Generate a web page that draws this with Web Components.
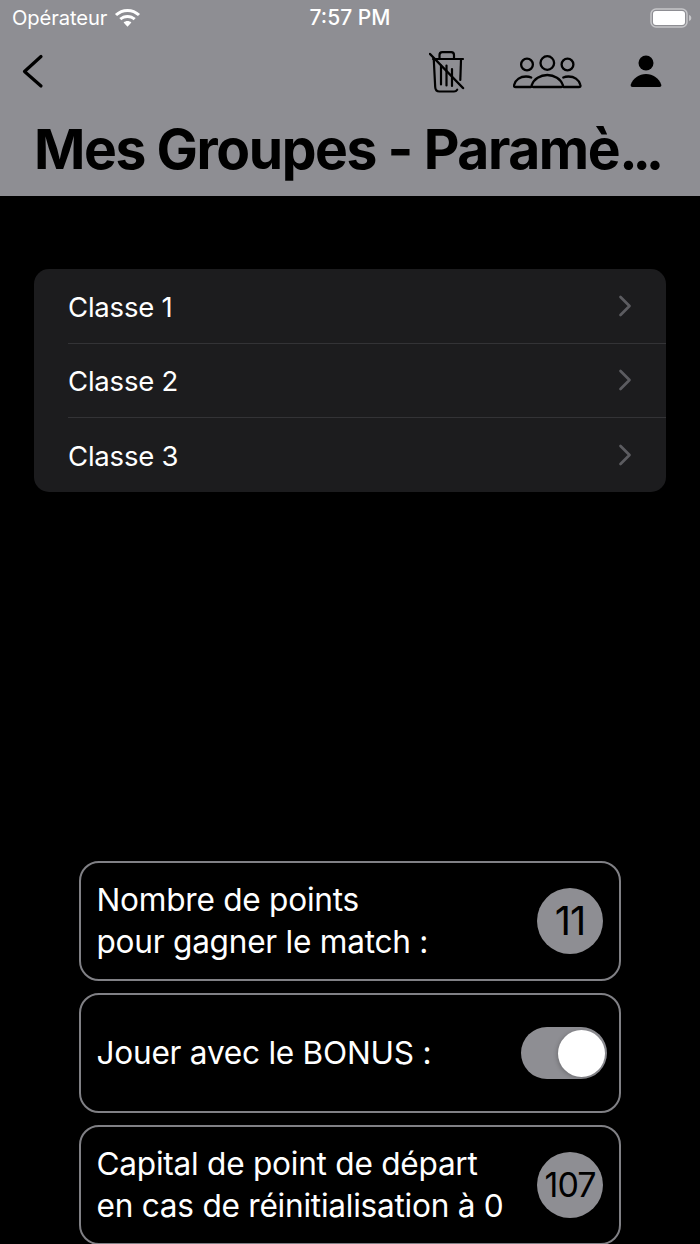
<!DOCTYPE html>
<html lang="fr"><head><meta charset="utf-8"><title>Mes Groupes</title>
<style>
html,body{margin:0;padding:0;background:#000;height:1244px;overflow:hidden}
body{font-family:Inter,"Liberation Sans",sans-serif;color:#fff}
app-screen{height:1244px}
</style></head><body>
<app-screen>
  <app-header>Mes Groupes - Paramè<span slot="dots">...</span></app-header>
  <group-list>
    <group-row>Classe 1</group-row>
    <group-row>Classe 2</group-row>
    <group-row>Classe 3</group-row>
  </group-list>
  <settings-panel>
    <setting-card>Nombre de points<br>pour gagner le match :<value-badge slot="control" size="40">11</value-badge></setting-card>
    <setting-card>Jouer avec le BONUS :<toggle-switch slot="control"></toggle-switch></setting-card>
    <setting-card>Capital de point de départ<br>en cas de réinitialisation à 0<value-badge slot="control" size="34">107</value-badge></setting-card>
  </settings-panel>
</app-screen>
<script>
function def(name, html, init){
  customElements.define(name, class extends HTMLElement{
    constructor(){super();this.attachShadow({mode:'open'}).innerHTML=html;}
    connectedCallback(){ if(init) init(this); }
  });
}
def('app-screen',`<style>:host{display:flex;flex-direction:column;overflow:hidden;background:#000}</style><slot></slot>`);
def('app-header',`<style>
:host{display:flex;flex-direction:column;height:196px;background:#8e8e93;color:#000;flex:none;overflow:hidden}
.status{height:35px;display:grid;grid-template-columns:1fr auto 1fr;align-items:center;color:#fff;font-size:20.200px;padding:0 8px 0 12px}
.l{display:flex;align-items:center;gap:6px;letter-spacing:-.1px}
.t{font-weight:500;font-size:21px;padding-right:4px}
.r{display:flex;justify-content:flex-end}
.nav{height:71px;display:flex;align-items:center;padding:0 38px 0 21px}
.nav svg{display:block}
.sp{flex:1}
h1{margin:9px 0 0;font-size:55.200px;line-height:68px;font-weight:700;letter-spacing:-1.420px;white-space:nowrap;padding-left:34px}
::slotted([slot=dots]){letter-spacing:-5.200px}
</style>
<div class="status">
 <div class="l"><span>Opérateur</span>
  <svg width="29" height="20" viewBox="0 0 26 18"><path fill="#fff" d="M13 3.600c3.600 0 6.900 1.400 9.400 3.700l1.900-2C21.300 2.500 17.300.8 13 .8S4.700 2.500 1.700 5.300l1.900 2C6.100 5 9.400 3.600 13 3.600zM13 9c2.100 0 4 .8 5.500 2.100l1.900-2C18.400 7.300 15.800 6.200 13 6.200S7.600 7.300 5.600 9.100l1.900 2C9 9.800 10.900 9 13 9zM13 11.700c-1.300 0-2.500.5-3.500 1.300l3.500 3.800 3.500-3.800c-1-.8-2.200-1.300-3.500-1.300z"/></svg></div>
 <div class="t">7:57 PM</div>
 <div class="r"><svg width="42" height="20" viewBox="0 0 42 20"><rect x="1" y="1" width="36" height="18" rx="5" fill="none" stroke="#c6c6c9" stroke-width="1.500"/><rect x="3" y="3" width="32" height="14" rx="3" fill="#fff"/><path d="M39 7c1.500.4 2.300 1.500 2.300 3s-.8 2.600-2.300 3z" fill="#c6c6c9"/></svg></div>
</div>
<div class="nav">
 <svg width="24" height="36" viewBox="0 0 24 36"><path d="M20 3.500 3.500 18.500 20 33" fill="none" stroke="#000" stroke-width="3.200" stroke-linecap="round" stroke-linejoin="round"/></svg>
 <span class="sp"></span>
 <svg width="38" height="44" viewBox="0 0 38 44" style="margin-right:46px">
  <g fill="none" stroke="#000" stroke-width="2.200" stroke-linecap="round" stroke-linejoin="round">
   <path d="M4 10H34"/><path d="M10.500 9.500V6c0-1.800 1-2.800 2.800-2.800h8.900c1.800 0 2.800 1 2.800 2.800v3.500"/>
   <path d="M4.800 11l1.400 27c.1 3 1.700 4.500 4.300 4.500h14.500c1.500 0 2.500-.6 3.200-1.800"/><path d="M32 11l-.7 20"/>
   <path d="M12 16.500v19M17.500 16.500v20M23 20v17"/>
   <path d="M1 5 34 39" stroke-width="2.500"/>
  </g>
 </svg>
 <svg width="70" height="40" viewBox="0 0 70 40" style="margin-right:47px">
  <g fill="none" stroke="#000" stroke-width="2.300" stroke-linecap="round">
   <circle cx="14" cy="13.500" r="5.900"/><circle cx="34.300" cy="12" r="6.800"/><circle cx="54.500" cy="13.500" r="5.900"/>
   <path d="M18 36H2.700c-1.500 0-2-.8-1.600-2C2.500 28.500 7.500 25.500 13 25.500c2 0 3.700.3 5.200 1"/>
   <path d="M50.500 36h15.300c1.500 0 2-.8 1.600-2-1.400-5.500-6.400-8.500-11.900-8.500-2 0-3.700.3-5.200 1"/>
   <path d="M20.300 36c-1.500 0-2-.8-1.500-2C20.800 28 27.300 24 34.300 24s13.500 4 15.500 10c.5 1.200 0 2-1.500 2z"/>
  </g>
 </svg>
 <svg width="32" height="34" viewBox="0 0 32 34"><circle cx="16" cy="9" r="7.500"/><path d="M2.500 33c-1.500 0-2.200-1-1.700-2.500C3 24.500 9 20 16 20s13 4.500 15.200 10.500c.5 1.500-.2 2.500-1.700 2.500z"/></svg>
</div>
<h1><slot></slot><slot name="dots"></slot></h1>`);
def('group-list',`<style>:host{display:block;margin:73px 34px 0;background:#1c1c1e;border-radius:15px;overflow:hidden;flex:none}</style><slot></slot>`);
def('group-row',`<style>
:host{display:block;padding-left:34px}
:host(:not(:last-child)) .in{border-bottom:1px solid #333336}
.in{height:73.660px;display:flex;align-items:center;justify-content:space-between;padding-right:34px;font-size:27.500px;letter-spacing:-.2px}
span{padding-top:2px}
svg{display:block}
</style><div class="in"><span><slot></slot></span><svg width="14" height="22" viewBox="0 0 14 22"><path d="M2.500 2 11.500 11 2.500 20" fill="none" stroke="#5c5c60" stroke-width="2.700" stroke-linecap="round" stroke-linejoin="round"/></svg></div>`);
def('settings-panel',`<style>:host{display:flex;flex-direction:column;gap:12px;margin:369px 79px 0;flex:none}</style><slot></slot>`);
def('setting-card',`<style>
:host{display:flex;align-items:center;justify-content:space-between;height:120px;box-sizing:border-box;border:2px solid #808085;border-radius:20px;padding:0 12px 0 15.500px;font-size:31.600px;line-height:42px;letter-spacing:-.25px}
</style><div><slot></slot></div><slot name="control"></slot>`);
def('value-badge',`<style>
:host{display:flex;align-items:center;justify-content:center;width:66px;height:66px;border-radius:50%;background:#8e8e93;color:#000;margin-right:4px;letter-spacing:-1px}
</style><slot></slot>`, el=>{el.style.fontSize=el.getAttribute('size')+'px';});
def('toggle-switch',`<style>
:host{display:block;width:86px;height:52px;border-radius:26px;background:#8e8e93;position:relative}
i{position:absolute;right:2px;top:3px;width:47px;height:47px;border-radius:50%;background:#fff;box-shadow:-1px 1px 4px rgba(0,0,0,.22)}
</style><i></i>`);
</script>
</body></html>
